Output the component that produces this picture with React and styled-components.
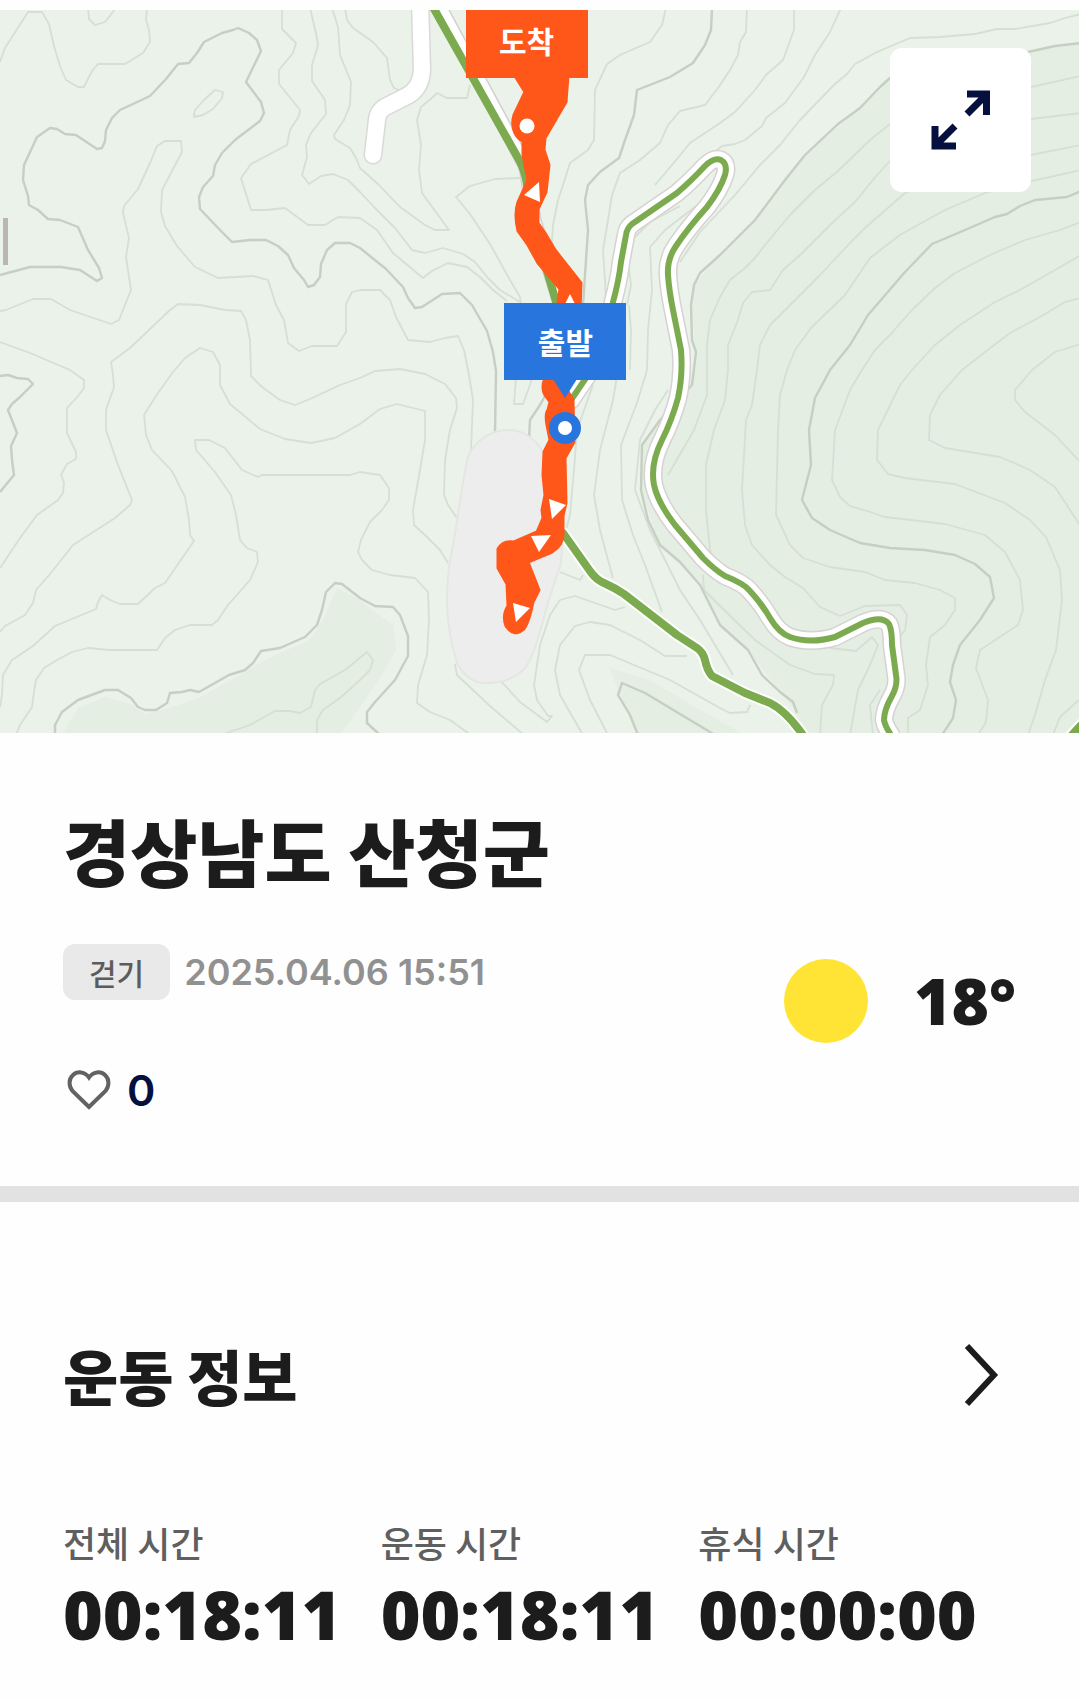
import React from 'react';
import styled, { createGlobalStyle } from 'styled-components';

const GlobalStyle = createGlobalStyle`
  * {
    box-sizing: border-box;
  }

  body {
    margin: 0;
    background: #fefefe;
    color: #1c1c1c;
    font-family: "Noto Sans CJK KR", sans-serif;
  }

  h1, h2, p, dl, dt, dd {
    margin: 0;
  }
`;

const numberFont = 'Inter, "Noto Sans CJK KR", sans-serif';
const displayNumberFont = '"Open Sans", "Noto Sans CJK KR", sans-serif';

const Page = styled.main`
  padding-top: 10px;
`;

const MapPanel = styled.section`
  position: relative;
  width: 100%;
  aspect-ratio: 1079 / 723;
  overflow: hidden;
  background: #eaf2e9;
`;

const MapDrawing = styled.svg`
  display: block;
  width: 100%;
  height: 100%;
`;

// Pins sit on the map canvas, anchored by the middle of their box
const Pin = styled.div`
  position: absolute;
  left: ${(props) => props.$left};
  top: ${(props) => props.$top};
  transform: translateX(-50%);
  display: flex;
  align-items: center;
  justify-content: center;
  width: 122px;
  height: 77px;
  background: ${(props) => props.$color};
  color: white;
  font-size: 30px;
  font-weight: 700;
  line-height: 40px;
`;

const ExpandButton = styled.button`
  position: absolute;
  top: 38px;
  right: 48px;
  display: flex;
  align-items: center;
  justify-content: center;
  width: 141px;
  height: 144px;
  padding: 0;
  border: none;
  border-radius: 12px;
  background: white;
  color: #05103f;
  cursor: pointer;
`;

const Summary = styled.section`
  display: flex;
  justify-content: space-between;
  align-items: flex-end;
  padding: 76px 63px 68px;
  border-bottom: 16px solid #e2e2e2;
`;

const SummaryText = styled.div`
  display: flex;
  flex-direction: column;
  align-items: flex-start;
`;

const Title = styled.h1`
  font-size: 73px;
  font-weight: 900;
  line-height: 80px;
`;

const MetaRow = styled.div`
  display: flex;
  align-items: center;
  gap: 14px;
  margin-top: 55px;
`;

const Chip = styled.span`
  padding: 8px 26px;
  border-radius: 12px;
  background: #e9e9e9;
  color: #5c5c5c;
  font-size: 30px;
  font-weight: 500;
  line-height: 40px;
`;

const DateText = styled.time`
  color: #919191;
  font-family: ${numberFont};
  font-size: 36px;
  font-weight: 600;
  line-height: 48px;
`;

const LikeButton = styled.button`
  display: flex;
  align-items: center;
  gap: 16px;
  margin-top: 62px;
  padding: 0 4px;
  border: none;
  background: none;
  color: #05103f;
  font-family: ${numberFont};
  font-size: 43px;
  font-weight: 600;
  line-height: 56px;
  cursor: pointer;
`;

const Weather = styled.div`
  display: flex;
  align-items: center;
  gap: 46px;
  margin-bottom: 75px;
`;

const Sun = styled.span`
  width: 84px;
  height: 84px;
  border-radius: 50%;
  background: #ffe335;
`;

const Temperature = styled.span`
  font-family: ${displayNumberFont};
  font-size: 64px;
  font-weight: 800;
  line-height: 80px;
`;

const Workout = styled.section`
  padding: 133px 63px 48px;
`;

const WorkoutHeader = styled.div`
  display: flex;
  justify-content: space-between;
  align-items: center;
`;

const SectionTitle = styled.h2`
  font-size: 60px;
  font-weight: 900;
  line-height: 80px;
`;

const MoreLink = styled.a`
  display: flex;
  padding: 0 17px;
  color: #1c1c1c;
`;

const Stats = styled.dl`
  display: grid;
  grid-template-columns: repeat(3, 1fr);
  margin-top: 103px;
`;

const StatLabel = styled.dt`
  color: #5f5f5f;
  font-size: 36px;
  font-weight: 500;
  line-height: 48px;
`;

const StatValue = styled.dd`
  font-family: ${displayNumberFont};
  font-size: 68px;
  font-weight: 800;
  line-height: 96px;
`;

const stats = [
  { label: '전체 시간', value: '00:18:11' },
  { label: '운동 시간', value: '00:18:11' },
  { label: '휴식 시간', value: '00:00:00' },
];

// Ten metre contour lines
const minorContours = [
  '0,62 5,48 28,12 42,12 49,24 54,46 60,66 66,80 78,87 84,87 92,71 98,64 125,64 143,53 150,42 149,30 146,20 147,8',
  '88,8 89,19 95,25 105,22 116,8',
  '194,116 195,110 205,99 215,90 223,92 222,98 213,109 203,115 194,117 194,113',
  '0,311 6,310 33,299 51,299 70,310 111,324 119,320 131,290 126,257 129,238 123,213 124,206 138,189 150,163 157,146 165,141 181,141 182,152 162,190 161,212 165,226 177,246 195,267 218,278 253,276 268,280 276,305 284,320 288,343 299,351 312,346 337,346 346,332 346,304 352,292 360,290 380,290 390,300 396,317 408,340 430,342 445,338 458,336 464,350 469,375 473,400 471,450',
  '282,8 282,29 296,43 293,53 279,70 279,84 292,100 300,110 299,116 290,130 287,145 251,164 241,178 251,210 266,210 285,208 300,219 308,225 325,225 338,217 360,218 377,230 393,253 423,278 432,271 448,263 467,267 480,277 493,290 507,301',
  '310,8 316,33 318,45 312,65 312,81 325,100 326,114 311,133 306,145 307,157 302,175 309,184 321,176 333,174 348,180 360,192 375,208 395,228 412,250 425,253 443,248 463,254 475,262 488,278 500,290 520,302',
  '332,8 338,27 340,55 351,82 350,105 344,120 334,135 335,139 350,148 356,158 360,168 378,184 400,207 425,225 435,230 449,230 422,193 419,170 421,145 417,120 421,107 433,97 437,93 447,98 467,98 470,85',
  '345,8 347,20 353,28 373,42 387,58 390,80 394,88 402,91',
  '520,178 495,179 470,186 456,197 470,214 490,244 510,280 520,297 521,305',
  '0,342 30,353 70,370 84,380 84,388 79,395 67,408 67,433 76,452 76,459 67,464 61,475 64,482 63,493 58,500 37,515 20,538 0,568',
  '360,378 340,385 310,399 295,405 280,400 262,387 251,376 250,340 246,320 241,311 225,310 200,305 178,304 170,310 130,348 111,362 113,375 114,387 106,410 106,430 118,465 132,500 130,505 115,518 73,545 50,574 36,590 33,603 25,615 5,626 0,632',
  '360,378 375,371 400,369 425,374 445,384 456,398 457,408 450,430 445,460 444,495 448,505 457,518',
  '448,563 440,550 425,535 414,525 413,510 420,470 425,440 425,411 397,404 380,409 360,424 335,438 311,443 285,439 260,429 230,404 220,385 220,365 213,352 200,348 185,358 173,372 158,393 144,415 146,435 152,450 172,471 185,497 189,520 190,535 194,541 165,583 155,588 138,604 120,604 110,600 102,595 98,602 96,609 55,626 33,646 12,660 3,675 2,695 0,707',
  '468,733 450,720 430,712 417,703 418,685 427,655 429,620 428,592 415,578 390,575 372,570 362,560 358,552 361,540 370,522 382,510 389,500 389,488 380,475 360,472 350,475 262,475 258,477 242,470 225,448 209,440 195,440 196,450 215,472 231,495 236,515 240,540 247,548 257,552 258,562 250,580 228,605 218,620 212,625 190,625 175,630 165,638 157,650 110,650 88,648 72,652 57,660 44,668 36,680 34,692 32,707 20,725 16,735',
  '226,733 250,725 275,711 290,711 300,713 311,707 315,690 320,684 345,670 367,652 373,660 370,670 360,680 340,698 323,710 317,720 317,735',
  '666,8 662,25 650,42 620,55 607,64 595,90 594,140 588,150 570,163 563,185 558,200 553,225 552,240 553,270',
  '747,8 746,32 740,42 738,55 730,70 718,88 705,105 680,111 668,125 660,143 640,160 620,173 612,195 608,220 603,250 605,280 606,305',
  '794,8 794,30 783,60 766,75 755,90 735,112 720,123 690,143 672,165 655,185',
  '841,8 830,32 815,55 804,77 785,103 766,118 762,126 745,140 735,144 722,146 705,160',
  '627,305 631,285 628,262 632,240 650,222 680,206',
  '647,370 648,330 652,290 650,247 665,230 700,203',
  '630,370 631,330 629,305',
  '1081,14 1065,18 1050,23 1015,29 997,29 975,34 940,37 910,38 877,52 855,64 847,74 835,84 800,120 780,145 760,165 735,195 718,213 700,232 680,262',
  '1081,76 1031,87 890,124 870,140 838,171 815,190 790,215 765,245 755,258 745,268 730,280 720,297 710,320 707,345 707,370 707,395 694,430 668,475',
  '1081,113 1031,119 930,142 890,161 877,175 855,202 830,225 800,255 783,270 770,290 752,292 743,303 738,320 728,345 728,370 725,400 714,430 706,465 706,510 710,550 716,565',
  '1081,145 1031,155 960,172 905,193 865,228 850,243 820,275 795,300 770,325 760,345 757,370 752,405 746,420 742,490 745,525 752,545 770,565 785,577 803,588 820,607 840,616 865,606 900,605 907,615 905,630 896,642',
  '1081,170 1050,177 1031,181 985,193 945,210 900,235 870,258 845,295 811,328 795,350 787,370 780,395 778,430 776,515 790,545 803,558 830,567 865,572 885,580 915,583 940,590 955,598 955,610 945,625 930,637 926,665 928,685 920,710 908,718 908,735',
  '1081,222 1060,230 1025,240 990,255 955,273 935,288 910,312 890,335 875,350 862,370 850,390 835,430 832,480 840,497 850,506 870,512 885,517 945,524 985,535 1005,552 1020,580 1023,610 1018,625 980,650 976,668 988,700 986,722 978,735',
  '1081,255 1055,270 1020,290 995,302 960,325 935,345 912,370 900,385 878,430 877,460 888,474 905,478 955,484 1005,503 1030,520 1046,537 1060,570 1062,600 1056,650 1045,680 1035,715 1028,735',
  '1081,298 1065,302 1040,317 1010,333 985,352 962,370 940,395 930,415 929,440 945,448 1000,457 1030,470 1055,487 1070,510 1081,527',
  '1081,344 1055,352 1032,370 1015,390 1015,400 1025,412 1055,435 1081,463',
  '1081,698 1060,717 1053,735',
  '703,575 704,590 720,606 755,640 790,665 815,674 834,675 833,685 822,705 820,735',
  '830,648 856,651 872,637 878,645 870,665 858,690 850,735',
  '880,690 870,705 873,735',
  '528,370 516,378 514,404 523,404 530,385 534,370',
  '593,385 577,430 574,470 570,515 566,530',
  '618,370 613,400 600,450 594,495 600,530 608,560 613,578',
  '647,370 638,400 621,445 622,500 633,535 645,565 662,612',
  '668,390 655,410 640,440 635,490 650,530 680,590 700,620 733,675',
  '560,572 580,580 583,575',
  '625,607 615,610 595,603 575,596 560,600 550,615 540,645 534,685 537,700 548,716 552,716 547,722 520,702 500,680',
  '687,656 665,656 640,640 610,625 590,622 575,626 560,645 555,670 560,695 583,735',
  '750,705 747,712 730,713 720,708 670,680 610,655 585,655 579,670 590,700 608,735',
  '455,664 457,675 490,706 524,735',
];

const majorContours = [
  '0,275 30,267 61,267 80,270 97,281 102,278 99,268 88,250 78,227 60,220 48,219 38,210 29,205 28,196 23,180 24,165 37,137 50,128 57,129 65,134 76,135 97,149 102,148 105,141 106,130 112,118 120,110 150,96 166,79 178,64 189,63 197,53 204,42 222,33 233,30 238,28 249,33 257,40 261,51 246,82 261,102 264,113 260,121 235,140 222,153 215,165 213,176 203,187 199,197 200,209 220,230 232,242 250,240 266,240 278,246 288,255 294,268 304,280 308,287 314,285 320,277 321,264 327,250 335,243 350,243 360,248 386,269 403,287 408,298 415,308 422,307 442,294 460,293 472,305 487,331 493,352 496,371 495,433',
  '0,376 8,375 17,378 28,379 33,384 20,397 12,404 8,410 17,433 11,446 12,460 14,475 0,492',
  '55,735 55,725 62,712 78,700 105,690 118,690 131,698 138,707 145,710 156,710 167,703 170,693 182,692 190,690 199,692 229,675 245,670 253,663 261,651 280,648 305,637 317,625 322,610 326,592 335,583 342,584 360,598 375,606 393,607 400,615 408,636 408,656 395,680 375,702 367,712 367,723 380,735',
  '712,8 711,30 705,45 693,63 670,77 637,90 634,115 625,140 619,158 600,172 588,185 585,200 588,230 586,260 583,305',
  '545,396 540,405 530,420 529,440',
  '1081,43 1055,46 1028,52 890,78 880,87 860,108 838,124 805,155 785,180 755,220 735,240 720,255 700,273 694,285 691,305 692,340 696,352 692,385 660,420 642,445 641,490 648,520 660,545 680,562 700,585 720,625 748,650 762,675 780,692 793,702 797,713',
  '1081,191 1067,197 1035,200 1020,206 1007,214 995,217 965,230 932,244 905,272 868,315 850,345 830,370 815,398 809,430 811,465 802,500 812,518 830,530 860,543 890,548 925,550 955,555 975,564 990,577 994,598 980,620 960,645 953,665 950,682 956,700 953,718 942,735',
  '638,735 630,715 618,695 622,683 645,693 690,720 715,735',
];

const hairpin =
  'M571,400 L590,372 Q610,335 613,302 Q619,280 621,262 L626,235 Q627,228 632,224 L677,193 Q690,182 705,166 Q714,157 721,160 Q728,164 725,175 Q720,190 707,207 Q688,228 676,246 Q667,259 668,275 Q669,290 673,310 L681,350 Q683,375 678,398 Q672,420 662,440 Q650,464 654,485 Q658,503 675,525 L703,558 Q715,570 725,576 Q745,584 750,591 Q762,604 770,618 Q779,633 790,637 Q810,644 835,637 L863,623 Q882,615 889,624 Q892,630 892,645 L896,675 Q898,685 892,696 Q884,710 884,720 Q885,726 891,735';

const valleyPath =
  'M563,533 L590,571 Q596,580 606,584 Q615,588 624,594 L677,635 L697,648 Q703,652 705,660 Q707,670 712,676 L745,693 L770,703 Q786,711 803,735';

const MoreIcon = () => (
  <svg width="35" height="64" viewBox="0 0 35 64" fill="none" aria-hidden="true">
    <path d="M3 3L30 32L3 61" stroke="currentColor" strokeWidth="6" />
  </svg>
);

const HeartIcon = () => (
  <svg width="44" height="42" viewBox="0 0 44 42" fill="none" aria-hidden="true">
    <path
      d="M22 38L5.500 22C1.500 17 1.500 10 6 6C10.500 1.800 18 2.500 22 8.500C26 2.500 33.500 1.800 38 6C42.500 10 42.500 17 38.500 22Z"
      stroke="#626262"
      strokeWidth="4"
    />
  </svg>
);

const ExpandIcon = () => (
  <svg width="60" height="60" viewBox="0 0 60 60" fill="none" aria-hidden="true">
    <path d="M36 4H55.500V25M55 5L36 24" stroke="currentColor" strokeWidth="7" />
    <path d="M4 36V56H25M5 55L24 36" stroke="currentColor" strokeWidth="7" />
  </svg>
);

function TrailMap() {
  return (
    <MapDrawing viewBox="0 10 1079 723" preserveAspectRatio="xMidYMid slice" role="img" aria-label="이동 경로 지도">
      {/* Higher ground */}
      <g fill="#e4eee3">
        <polygon points="1081,43 1028,52 890,78 860,108 805,155 755,220 720,255 694,285 691,305 696,352 692,385 660,420 642,445 641,490 660,545 700,585 720,625 748,650 797,713 803,735 1081,735" />
        <polygon points="62,735 78,708 105,697 131,704 145,714 170,708 199,698 229,681 258,664 280,653 310,640 323,620 337,588 360,600 375,612 393,625 396,650 385,670 365,700 340,735" />
        <polygon points="610,668 650,680 700,710 745,735 640,735 622,700" />
      </g>

      <g fill="none" strokeLinejoin="round">
        {minorContours.map((points) => (
          <polyline key={points} points={points} stroke="#d6dfd4" strokeWidth="1.8" />
        ))}
        {majorContours.map((points) => (
          <polyline key={points} points={points} stroke="#c5cfc2" strokeWidth="2.4" />
        ))}
      </g>

      <path
        d="M508,430 C490,430 474,442 468,457 C462,480 457,530 450,560 C446,590 444,620 457,663 C466,680 478,684 489,683 C505,682 518,677 526,667 C540,645 543,610 560,567 C565,540 558,470 542,450 C532,436 522,430 508,430 Z"
        fill="#ededed"
        stroke="#e5e6e4"
        strokeWidth="2"
      />
      <path d="M5.500,218V265" stroke="#bab6b4" strokeWidth="5" />

      <g fill="none" strokeLinecap="round" strokeLinejoin="round">
        <path d="M420,0 L422,70 Q421,90 405,97 L385,107 Q378,111 377,120 L373,155" stroke="#dad8d9" strokeWidth="19" />
        <path d="M420,0 L422,70 Q421,90 405,97 L385,107 Q378,111 377,120 L373,155" stroke="#ffffff" strokeWidth="16" />

        <path d="M436,0 L526,167 L534,220 L562,310" stroke="#d3d0d2" strokeWidth="15" />
        <path d="M436,0 L526,167 L534,220 L562,310" stroke="#ffffff" strokeWidth="12" />
        <path d="M429,0 L518,158 Q525,170 527,185 L538,240 L557,305" stroke="#7caa4f" strokeWidth="8" />

        <path d={valleyPath} stroke="#ffffff" strokeWidth="12" />
        <path d={valleyPath} stroke="#7caa4f" strokeWidth="8" />

        <path d={hairpin} stroke="#d6d2d4" strokeWidth="19" />
        <path d={hairpin} stroke="#ffffff" strokeWidth="16" />
        <path d={hairpin} stroke="#7caa4f" strokeWidth="6" />

        <path d="M1069,738 L1084,722" stroke="#ffffff" strokeWidth="12" />
        <path d="M1069,738 L1084,722" stroke="#7caa4f" strokeWidth="8" />
      </g>

      {/* Walked track */}
      <g fill="#ff571a" stroke="#ff571a" strokeWidth="3" strokeLinejoin="round">
        <path d="M515,76 L525,92 L514,115 Q511,125 515,133 Q518,139 523,141 L523,155 L528,180 L518,202 Q514,214 518,231 L528,245 L538,263 L560,289 L557,310 L580,310 L581,283 L555,250 L545,233 L538,223 L538,209 L546,192 L549,165 L544,150 L545,138 L566,102 L568,76 Z" />
        <path d="M545,378 Q541,388 545,395 L550,402 L548,410 Q545,414 547,425 L550,440 L544,452 L543,475 L545,495 L542,510 L543,518 L537,532 L514,542 Q503,540 498,549 L498,568 L507,584 L508,606 Q502,615 506,626 Q514,638 524,629 Q529,622 533,602 L539,590 L528,562 L552,552 Q563,545 563,535 L563,516 L566,503 L565,458 L574,442 L573,400 L560,378 Z" />
      </g>
      <g fill="#ffffff">
        <circle cx="527" cy="126" r="7.500" />
        <polygon points="539,182 540,202 524,195" />
        <polygon points="570,294 564,306 576,306" />
        <polygon points="549,499 566,505 552,519" />
        <polygon points="531,536 551,535 539,552" />
        <polygon points="513,603 530,608 516,622" />
      </g>
      <polygon points="553,379 577,379 565,398" fill="#2975de" />
      <circle cx="565" cy="428" r="11.500" fill="#ffffff" stroke="#2975de" strokeWidth="9" />
    </MapDrawing>
  );
}

export default function App() {
  return (
    <>
      <GlobalStyle />
      <Page>
        <MapPanel>
          <TrailMap />
          <Pin $left="48.8%" $top="-9px" $color="#ff571a">도착</Pin>
          <Pin $left="52.4%" $top="40.5%" $color="#2975de">출발</Pin>
          <ExpandButton type="button" aria-label="지도 확대">
            <ExpandIcon />
          </ExpandButton>
        </MapPanel>

        <Summary>
          <SummaryText>
            <Title>경상남도 산청군</Title>
            <MetaRow>
              <Chip>걷기</Chip>
              <DateText dateTime="2025-04-06T15:51">2025.04.06 15:51</DateText>
            </MetaRow>
            <LikeButton type="button" aria-label="좋아요 0">
              <HeartIcon />
              0
            </LikeButton>
          </SummaryText>
          <Weather>
            <Sun role="img" aria-label="맑음" />
            <Temperature>18°</Temperature>
          </Weather>
        </Summary>

        <Workout>
          <WorkoutHeader>
            <SectionTitle>운동 정보</SectionTitle>
            <MoreLink href="#workout" aria-label="운동 정보 더보기">
              <MoreIcon />
            </MoreLink>
          </WorkoutHeader>
          <Stats>
            {stats.map(({ label, value }) => (
              <div key={label}>
                <StatLabel>{label}</StatLabel>
                <StatValue>{value}</StatValue>
              </div>
            ))}
          </Stats>
        </Workout>
      </Page>
    </>
  );
}
